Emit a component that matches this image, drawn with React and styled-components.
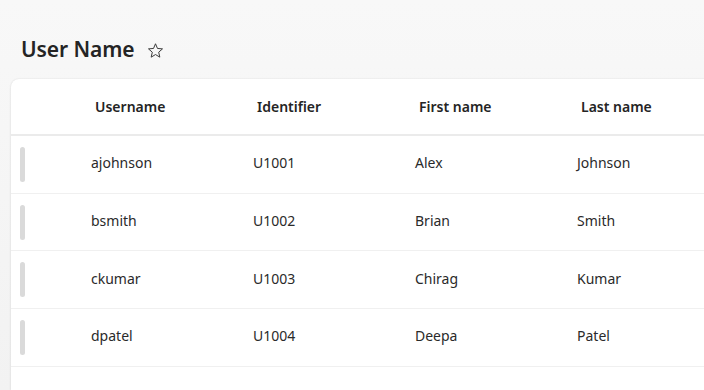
import React from 'react';
import styled, { createGlobalStyle } from 'styled-components';

const GlobalStyle = createGlobalStyle`
	html, body {
		margin: 0;
		padding: 0;
		overflow: hidden;
	}
	body {
		font-family: "Noto Sans", "Open Sans", sans-serif;
		color: #242424;
		background: linear-gradient(180deg, #f8f8f8 0%, #f2f2f2 100%);
		min-height: 390px;
	}
`;

const Page = styled.div`
	display: flex;
	flex-direction: column;
	padding-top: 33px;
	min-height: 357px;
`;

const TitleBar = styled.div`
	display: flex;
	align-items: center;
	gap: 13px;
	padding-left: 21px;
	height: 32px;
`;

const Title = styled.h1`
	margin: 0;
	font-size: 21px;
	font-weight: 600;
	line-height: 32px;
	letter-spacing: -0.1px;
`;

const StarButton = styled.span`
	display: flex;
	align-items: center;
	margin-top: 3px;
`;

const Card = styled.div`
	margin: 14px -30px 0 11px;
	background: #ffffff;
	border-radius: 8px 8px 0 0;
	box-shadow: 0 0 2px rgba(0, 0, 0, 0.1), 0 1px 3px rgba(0, 0, 0, 0.06);
	flex: 1;
`;

const Row = styled.div`
	display: grid;
	grid-template-columns: 70px 162px 162px 162px 162px 1fr;
	align-items: center;
	height: ${p => (p.header ? '55px' : '56.7px')};
	border-bottom: ${p => (p.header ? '2px solid #ebebeb' : '1px solid #f0f0f0')};
`;

const HeadCell = styled.div`
	padding-left: 14px;
	padding-bottom: 1px;
	font-size: 14px;
	font-weight: 600;
	color: #242424;
`;

const Cell = styled.div`
	padding-left: 10px;
	padding-bottom: 3px;
	font-size: 14px;
	color: #2a2a2a;
`;

const HandleCell = styled.div`
	padding-left: 9px;
	display: flex;
	align-items: center;
`;

const Handle = styled.span`
	display: block;
	width: 5px;
	height: 35px;
	border-radius: 3px;
	background: #dadada;
`;

const columns = [
	{ accessor: 'username', Header: 'Username' },
	{ accessor: 'id', Header: 'Identifier' },
	{ accessor: 'first', Header: 'First name' },
	{ accessor: 'last', Header: 'Last name' },
];

const data = [
	{ username: 'ajohnson', id: 'U1001', first: 'Alex', last: 'Johnson' },
	{ username: 'bsmith', id: 'U1002', first: 'Brian', last: 'Smith' },
	{ username: 'ckumar', id: 'U1003', first: 'Chirag', last: 'Kumar' },
	{ username: 'dpatel', id: 'U1004', first: 'Deepa', last: 'Patel' },
];

const Star = () => (
	<svg width="17" height="17" viewBox="0 0 24 24" fill="none" stroke="#3a3a3a" strokeWidth="1.4" strokeLinejoin="miter">
		<path d="M12 2.5l2.8 6.6 7.1.6-5.4 4.7 1.6 7-6.1-3.7-6.1 3.7 1.6-7-5.4-4.7 7.1-.6z" />
	</svg>
);

export default function App() {
	return (
		<Page>
			<GlobalStyle />
			<TitleBar>
				<Title>User Name</Title>
				<StarButton>
					<Star />
				</StarButton>
			</TitleBar>
			<Card>
				<Row header>
					<div />
					{columns.map(c => (
						<HeadCell key={c.accessor}>{c.Header}</HeadCell>
					))}
					<div />
				</Row>
				{data.map(row => (
					<Row key={row.id}>
						<HandleCell>
							<Handle />
						</HandleCell>
						{columns.map(c => (
							<Cell key={c.accessor}>{row[c.accessor]}</Cell>
						))}
						<div />
					</Row>
				))}
			</Card>
		</Page>
	);
}
